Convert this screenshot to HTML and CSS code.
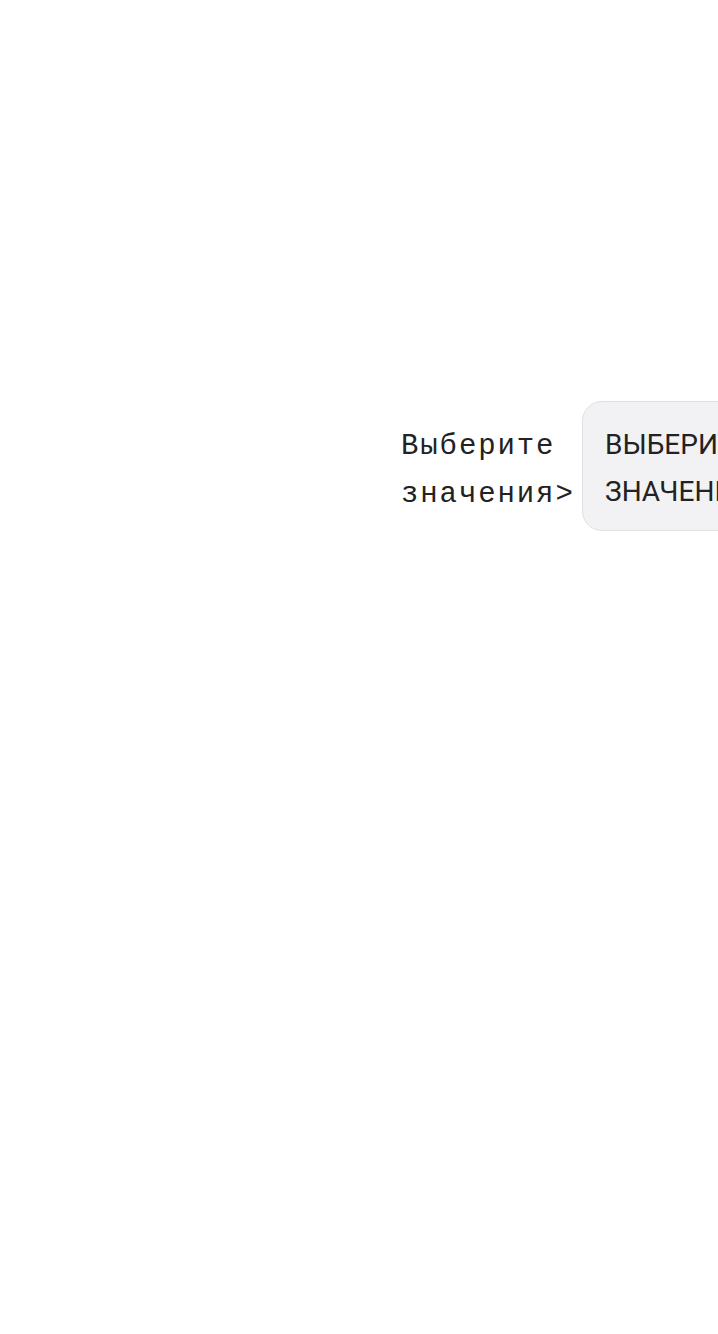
FILE: index.html
```html
<!DOCTYPE html>
<html lang="ru">
<head>
<meta charset="utf-8">
<title>Выберите значения</title>
<link rel="stylesheet" href="styles.css">
</head>
<body>
<div class="page">
  <div class="field">
    <label class="field-label">Выберите значения&gt;</label>
    <div class="select-box">ВЫБЕРИТЕ ЗНАЧЕНИЯ</div>
  </div>
</div>
</body>
</html>
```
FILE: styles.css
```css
html, body {
  margin: 0;
  padding: 0;
  background: #ffffff;
  overflow: hidden;
}
.page {
  width: 718px;
  height: 1334px;
  padding-top: 401px;
  padding-left: 401px;
  box-sizing: border-box;
  color: #222222;
}
.field {
  display: flex;
  align-items: baseline;
  width: 600px;
}
.field-label {
  flex: 0 0 181px;
  font-family: "Liberation Mono", monospace;
  font-size: 29px;
  line-height: 48px;
  letter-spacing: 1.9px;
}
.select-box {
  flex: 0 0 auto;
  width: 250px;
  box-sizing: border-box;
  padding: 19px 22px 15px 22px;
  font-family: Roboto, "Liberation Sans", sans-serif;
  font-size: 28px;
  line-height: 47px;
  background: #f2f2f4;
  border: 1px solid #e0e0e2;
  border-radius: 20px;
  text-transform: uppercase;
}
```
